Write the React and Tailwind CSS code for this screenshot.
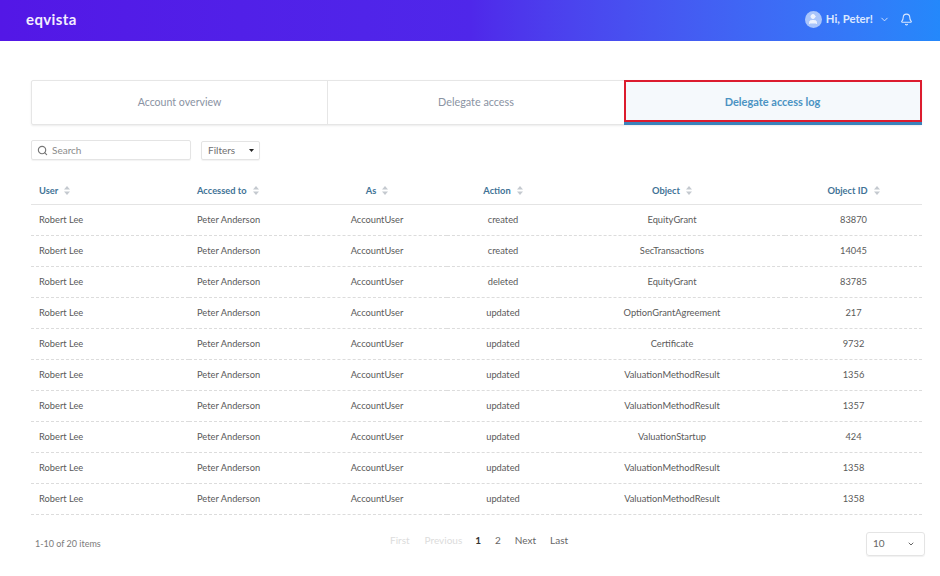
import React from "react";
import { Search, ChevronDown, Bell, User } from "lucide-react";

const rows = [
  ["created", "EquityGrant", "83870"],
  ["created", "SecTransactions", "14045"],
  ["deleted", "EquityGrant", "83785"],
  ["updated", "OptionGrantAgreement", "217"],
  ["updated", "Certificate", "9732"],
  ["updated", "ValuationMethodResult", "1356"],
  ["updated", "ValuationMethodResult", "1357"],
  ["updated", "ValuationStartup", "424"],
  ["updated", "ValuationMethodResult", "1358"],
  ["updated", "ValuationMethodResult", "1358"],
];

const SortIcon = () => (
  <svg width="6" height="9" viewBox="0 0 6 9" className="ml-[6px] inline-block align-[-1px]">
    <path d="M3 0 L6 3.5 H0 Z" fill="#c4c9cf" />
    <path d="M3 9 L6 5.5 H0 Z" fill="#c4c9cf" />
  </svg>
);

const Head = ({ label, left }) => (
  <th className={`h-[28px] p-0 pt-[2px] text-[9.3px] font-bold text-[#3f7396] ${left ? "pl-2 text-left" : "text-center"}`}>
    {label}
    <SortIcon />
  </th>
);

const App = () => {
  return (
    <div className="h-[576px] w-[940px] overflow-hidden bg-white font-['Lato',sans-serif]">
      {/* Header */}
      <header className="flex h-[41px] items-center justify-between bg-gradient-to-r from-[#5317e6] via-[#4f27ea] to-[#2488fb] pb-[3px] pl-[26px] pr-[27px]">
        <span className="text-[15px] font-bold tracking-wide text-[#f3eefe]">eqvista</span>
        <div className="flex items-center text-[#dce8fe]">
          <span className="flex h-[17px] w-[17px] items-center justify-center overflow-hidden rounded-full bg-[#a9c5fb]">
            <User size={12} fill="#eef3fe" stroke="#eef3fe" />
          </span>
          <span className="ml-[4px] text-[11.3px] font-bold">Hi, Peter!</span>
          <ChevronDown size={11} className="ml-[6px]" />
          <Bell size={13} className="ml-[10px]" />
        </div>
      </header>

      <main className="pl-[31px] pr-[18px] pt-[39px]">
        {/* Tabs */}
        <div className="flex h-[45px] rounded-[2px] border border-[#e6e6e6] shadow-[0_1px_2px_rgba(0,0,0,0.08)]">
          <div className="flex w-[296px] items-center justify-center border-r border-[#e6e6e6] text-[10.6px] text-[#8a93a3]">
            Account overview
          </div>
          <div className="flex w-[296px] items-center justify-center text-[10.8px] text-[#8a93a3]">
            Delegate access
          </div>
          <div className="relative flex flex-1 items-center justify-center bg-[#f5f9fc] text-[11px] font-bold text-[#4b93c3]">
            Delegate access log
            <div className="absolute -right-px -top-px left-0 h-[42px] border-2 border-[#dc1c2e]" />
            <div className="absolute -bottom-px -right-px left-0 h-[3px] bg-[#3b83bb]" />
          </div>
        </div>

        {/* Search and filters */}
        <div className="mt-[15px] flex items-center">
          <div className="flex h-[20px] w-[160px] items-center rounded-[2px] border border-[#e4e4e4] pl-[5px] shadow-[0_1px_1px_rgba(0,0,0,0.05)]">
            <Search size={11} strokeWidth={2.5} className="text-[#777]" />
            <span className="ml-[4px] text-[10px] text-[#8b8b8b]">Search</span>
          </div>
          <div className="ml-[10px] flex h-[19px] w-[59px] items-center justify-between rounded-[2px] border border-[#e4e4e4] pl-[6px] pr-[5px] shadow-[0_1px_1px_rgba(0,0,0,0.05)]">
            <span className="text-[10px] text-[#6f6f6f]">Filters</span>
            <svg width="5" height="3" viewBox="0 0 5 3">
              <path d="M0 0 H5 L2.5 3 Z" fill="#222" />
            </svg>
          </div>
        </div>

        {/* Table */}
        <table className="mt-[16px] w-[891px] table-fixed border-collapse">
          <colgroup>
            <col className="w-[158px]" />
            <col className="w-[118px]" />
            <col className="w-[140px]" />
            <col className="w-[112px]" />
            <col className="w-[226px]" />
            <col className="w-[137px]" />
          </colgroup>
          <thead>
            <tr className="border-b border-[#e4e4e4]">
              <Head label="User" left />
              <Head label="Accessed to" left />
              <Head label="As" />
              <Head label="Action" />
              <Head label="Object" />
              <Head label="Object ID" />
            </tr>
          </thead>
          <tbody>
            {rows.map(([action, object, id], i) => (
              <tr key={i} className="h-[31px] border-b border-dashed border-[#dcdcdc] text-[9.3px] text-[#5a5a5a]">
                <td className="pl-2">Robert Lee</td>
                <td className="pl-2">Peter Anderson</td>
                <td className="text-center">AccountUser</td>
                <td className="text-center">{action}</td>
                <td className="text-center">{object}</td>
                <td className="text-center">{id}</td>
              </tr>
            ))}
          </tbody>
        </table>

        {/* Footer */}
        <div className="mt-[17px] flex items-start">
          <span className="ml-[4px] mt-[5px] w-[355px] text-[9px] text-[#7b7b7b]">1-10 of 20 items</span>
          <div className="mt-[1px] flex items-center text-[10px] text-[#666]">
            <span className="text-[#dcdcdc]">First</span>
            <span className="ml-[15px] text-[#dcdcdc]">Previous</span>
            <span className="ml-[13px] font-bold text-[#333]">1</span>
            <span className="ml-[14px]">2</span>
            <span className="ml-[14px]">Next</span>
            <span className="ml-[14px]">Last</span>
          </div>
          <div className="-mr-[3px] ml-auto flex h-[24px] w-[59px] items-center justify-between rounded-[3px] border border-[#e4e4e4] pl-[6px] pr-[9px] text-[10px] text-[#666] shadow-[0_1px_1px_rgba(0,0,0,0.06)]">
            10
            <ChevronDown size={8} strokeWidth={3} />
          </div>
        </div>
      </main>
    </div>
  );
};

export default App;
